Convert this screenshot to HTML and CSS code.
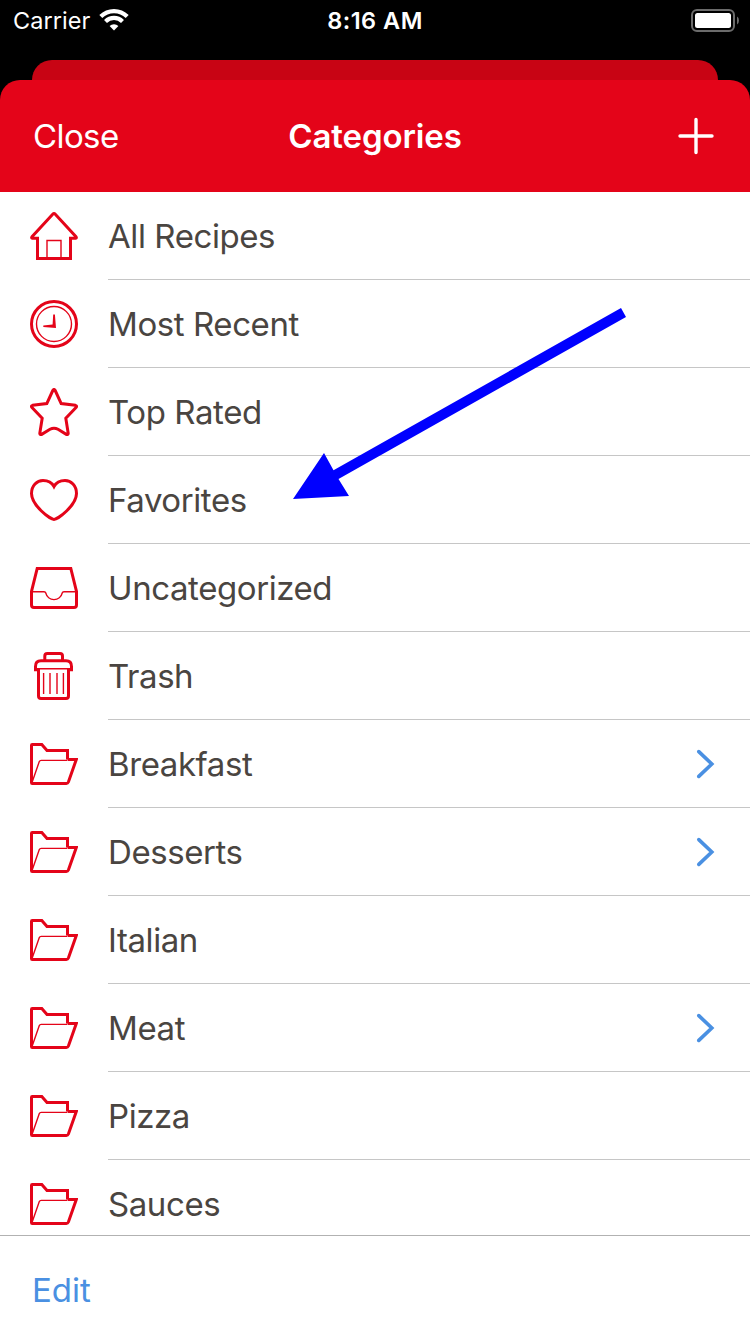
FILE: index.html
```html
<!DOCTYPE html>
<html lang="en">
<head>
    <meta charset="UTF-8">
    <meta name="viewport" content="width=device-width, initial-scale=1.0">
    <title>Categories</title>

    <link rel="stylesheet" href="styles.css">
</head>
<body>
    <svg class="sprite" width="0" height="0">
        <symbol id="folder" viewBox="0 0 48 48">
            <path d="M37.5 19.5V10.5H17L11.8 4.5H2.2Q1.5 4.5 1.5 5.2V42.8Q1.5 43.5 2.2 43.5H36.3Q37.8 43.5 38.4 42L46.3 19.5H37.5"/>
            <path class="thin" d="M2.2 42L9.3 21.5Q9.8 20.4 11.2 20.4H37"/>
        </symbol>
        <symbol id="chevron" viewBox="0 0 20 30">
            <path d="M3.8 2.6L16.8 15L3.8 27.4"/>
        </symbol>
    </svg>

    <div class="status-bar">
        <div class="carrier">
            <span>Carrier</span>
            <svg class="wifi" width="30" height="24" viewBox="0 0 30 24">
                <path class="wave" d="M1.8 8.6A18.8 18.8 0 0 1 28.2 8.6"/>
                <path class="wave" d="M6.5 13.4A12.2 12.2 0 0 1 23.5 13.4"/>
                <path class="dot" d="M15 22.6L10.6 18A6.4 6.4 0 0 1 19.4 18Z"/>
            </svg>
        </div>
        <span class="time">8:16 AM</span>
        <svg class="battery" width="48" height="23" viewBox="0 0 48 23">
            <rect class="shell" x="1" y="1" width="42" height="21" rx="5"/>
            <rect class="charge" x="4" y="4" width="36" height="15" rx="2.5"/>
            <path class="nub" d="M46 7.5Q48 8.5 48 11.5T46 15.5Z"/>
        </svg>
    </div>

    <div class="card-behind"></div>

    <div class="sheet">
        <div class="header">
            <span class="close">Close</span>
            <h2 class="title">Categories</h2>
            <svg class="add" width="36" height="38" viewBox="0 0 36 38">
                <path d="M2 19H34M18 2.5V35.5"/>
            </svg>
        </div>

        <div class="list">
            <div class="item">
                <svg class="icon" viewBox="0 0 48 48">
                    <path d="M7.5 46.5V26.2H2.4Q1.1 26 2 24.8L22.7 2.2Q24 .9 25.3 2.2L46 24.8Q46.9 26 45.6 26.2H40.5V46.5Z"/>
                    <path class="thin" d="M17 46V28.5H31V46"/>
                </svg>
                <div class="label"><span>All Recipes</span></div>
            </div>
            <div class="item">
                <svg class="icon" viewBox="0 0 48 48">
                    <circle cx="24" cy="24" r="22.5"/>
                    <circle class="thin" cx="24" cy="24" r="17.5"/>
                    <path class="solid" d="M23.2 14.4H24.9L26 27.9L13.3 26.9V25.4L22.6 24.4Z"/>
                </svg>
                <div class="label"><span>Most Recent</span></div>
            </div>
            <div class="item">
                <svg class="icon" viewBox="0 0 48 48">
                    <path d="M22.9 2.3Q24 .6 25.1 2.3L31.2 15.6L45.4 17.3Q47.4 18 46 19.6L35.8 30.3L38.2 45.3Q38 47.2 36.3 46.4L28 41.3Q24 39 20 41.3L11.7 46.4Q10 47.2 9.8 45.3L12.2 30.3L2 19.6Q.6 18 2.6 17.3L16.8 15.6Z"/>
                </svg>
                <div class="label"><span>Top Rated</span></div>
            </div>
            <div class="item">
                <svg class="icon" viewBox="0 0 48 48">
                    <path d="M24 43.5C20.5 43.5 1.5 29.5 1.5 17.5C1.5 9.5 7 4.5 13 4.5C18 4.5 22 6.8 24 10.5C26 6.8 30 4.5 35 4.5C41 4.5 46.5 9.5 46.5 17.5C46.5 29.5 27.5 43.5 24 43.5Z"/>
                </svg>
                <div class="label"><span>Favorites</span></div>
            </div>
            <div class="item">
                <svg class="icon" viewBox="0 0 48 48">
                    <path d="M7.2 4.5H40.8L46.5 27.5V41Q46.5 43.5 44 43.5H4Q1.5 43.5 1.5 41V27.5Z"/>
                    <path class="thin" d="M2 27.7H14Q15.5 27.7 15.8 29A8.4 8.4 0 0 0 32.2 29Q32.5 27.7 34 27.7H46"/>
                </svg>
                <div class="label"><span>Uncategorized</span></div>
            </div>
            <div class="item">
                <svg class="icon" viewBox="0 0 48 48">
                    <path d="M14.8 8.5V4Q14.8 1.5 17.3 1.5H30Q32.5 1.5 32.5 4V8.5"/>
                    <path d="M5.5 19.3V14.5Q5.5 8.8 11 8.8H36Q41.5 8.8 41.5 14.5V19.3M5.5 17.8H9M38 17.8H41.5"/>
                    <path d="M8.5 17V44Q8.5 46.5 11 46.5H36Q38.5 46.5 38.5 44V17"/>
                    <path class="thin" d="M5 16.7H42M13.6 21V42M20 21V42M27 21V42M33.4 21V42"/>
                </svg>
                <div class="label"><span>Trash</span></div>
            </div>
            <div class="item">
                <svg class="icon"><use href="#folder"/></svg>
                <div class="label"><span>Breakfast</span><svg class="more"><use href="#chevron"/></svg></div>
            </div>
            <div class="item">
                <svg class="icon"><use href="#folder"/></svg>
                <div class="label"><span>Desserts</span><svg class="more"><use href="#chevron"/></svg></div>
            </div>
            <div class="item">
                <svg class="icon"><use href="#folder"/></svg>
                <div class="label"><span>Italian</span></div>
            </div>
            <div class="item">
                <svg class="icon"><use href="#folder"/></svg>
                <div class="label"><span>Meat</span><svg class="more"><use href="#chevron"/></svg></div>
            </div>
            <div class="item">
                <svg class="icon"><use href="#folder"/></svg>
                <div class="label"><span>Pizza</span></div>
            </div>
            <div class="item">
                <svg class="icon"><use href="#folder"/></svg>
                <div class="label"><span>Sauces</span></div>
            </div>
        </div>

        <div class="footer">
            <span class="edit">Edit</span>
        </div>
    </div>

    <!-- arrow pointing at Favorites -->
    <svg class="arrow" width="334" height="192" viewBox="0 0 334 192">
        <path d="M0 191L31 145L40.5 162.3L328 0L333 9L45.5 171L56 188Z"/>
    </svg>
</body>
</html>
```
FILE: styles.css
```css
* {
    margin: 0;
    padding: 0;
    box-sizing: border-box;
}

body {
    position: relative;
    display: flex;
    flex-direction: column;
    width: 750px;
    height: 1334px;
    overflow: hidden;
    background-color: #000;
    font-family: Inter, "Liberation Sans", sans-serif;
}

svg {
    display: block;
}

.sprite {
    position: absolute;
}

.status-bar {
    display: grid;
    grid-template-columns: 1fr auto 1fr;
    align-items: center;
    height: 40px;
    margin-bottom: 20px;
    padding: 0 11px 0 13px;
    color: white;
    font-size: 23.5px;
}

.carrier {
    display: flex;
    align-items: center;
    gap: 9px;
    letter-spacing: 0.05px;
}

.wifi .wave {
    fill: none;
    stroke: white;
    stroke-width: 4.2px;
}

.wifi .dot {
    fill: white;
}

.time {
    margin-right: 2px;
    font-weight: 600;
    letter-spacing: 0.5px;
}

.battery {
    justify-self: end;
}

.battery .shell {
    fill: none;
    stroke: #6b6b6b;
    stroke-width: 2px;
}

.battery .charge {
    fill: white;
}

.battery .nub {
    fill: #6b6b6b;
}

.card-behind {
    height: 20px;
    margin: 0 32px;
    background-color: #c80414;
    border-radius: 20px 20px 0 0;
}

.sheet {
    display: flex;
    flex-direction: column;
    flex: 1;
    min-height: 0;
}

.header {
    display: grid;
    grid-template-columns: 1fr auto 1fr;
    align-items: center;
    height: 112px;
    padding: 0 36px 0 33px;
    background-color: #e40419;
    border-radius: 20px 20px 0 0;
    color: white;
    font-size: 33px;
}

.close {
    letter-spacing: -0.6px;
}

.title {
    margin-left: 3px;
    font-size: 33px;
    font-weight: 600;
    letter-spacing: -0.1px;
}

.add {
    justify-self: end;
    fill: none;
    stroke: white;
    stroke-width: 3.4px;
    stroke-linecap: round;
}

.list {
    flex: 1;
    min-height: 0;
    overflow: hidden;
    background-color: white;
}

.item {
    display: flex;
    align-items: center;
    gap: 30px;
    height: 88px;
    padding-left: 30px;
}

.icon {
    flex: none;
    width: 48px;
    height: 48px;
    fill: none;
    stroke: #e40419;
    stroke-width: 3px;
}

.thin {
    stroke-width: 1.4px;
}

.icon .solid {
    fill: #e40419;
    stroke: none;
}

.label {
    display: flex;
    flex: 1;
    align-items: center;
    justify-content: space-between;
    height: 88px;
    padding-right: 35px;
    border-bottom: 1px solid #c6c6c6;
    color: #4a4541;
    font-size: 33px;
    letter-spacing: -0.42px;
}

.more {
    width: 20px;
    height: 30px;
    fill: none;
    stroke: #4a90e2;
    stroke-width: 3.6px;
    stroke-linecap: round;
}

.footer {
    height: 99px;
    padding: 34px 32px 0;
    background-color: white;
    border-top: 1px solid #b2b2b2;
    color: #4a90e2;
    font-size: 33px;
    line-height: 40px;
}

.arrow {
    position: absolute;
    left: 293px;
    top: 308px;
    fill: #0000ff;
}
```
